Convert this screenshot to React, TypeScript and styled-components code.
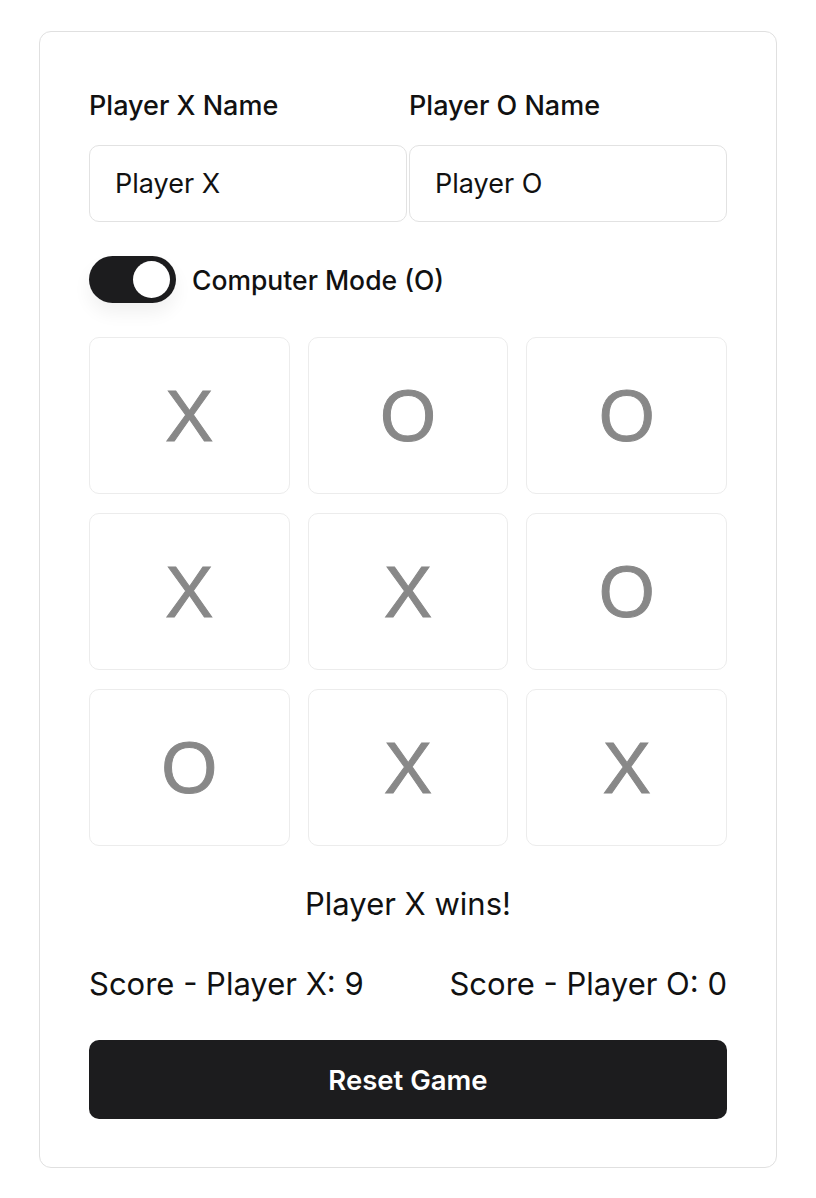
import React, { useState } from "react";
import styled, { createGlobalStyle } from "styled-components";

const Global = createGlobalStyle`
  html, body { margin: 0; padding: 0; background: #fff; }
  body { font-family: Inter, "Noto Sans", sans-serif; color: #111; }
  * { box-sizing: border-box; }
`;

const Page = styled.div`
  padding-top: 31px;
  display: flex;
  justify-content: center;
`;

const Card = styled.div`
  width: 738px;
  border: 1.5px solid #e0e0e0;
  border-radius: 12px;
  padding: 58px 49px 48px 49px;
  display: flex;
  flex-direction: column;
`;

const NameRow = styled.div`
  display: grid;
  grid-template-columns: 1fr 1fr;
  column-gap: 2px;
`;

const Field = styled.div`
  display: flex;
  flex-direction: column;
  gap: 23px;
`;

const Label = styled.label`
  font-size: 27px;
  line-height: 32px;
  font-weight: 550;
  color: #111;
`;

const Input = styled.input`
  height: 77px;
  border: 1.5px solid #e2e2e2;
  border-radius: 10px;
  padding: 0 25px;
  font-family: Inter, "Noto Sans", sans-serif;
  font-size: 27px;
  color: #111;
  outline: none;
  width: 100%;
`;

const ToggleRow = styled.div`
  margin-top: 34px;
  display: flex;
  align-items: center;
  gap: 16px;
`;

const Track = styled.button<{ $on: boolean }>`
  width: 87px;
  height: 47px;
  border-radius: 24px;
  border: none;
  padding: 0;
  background: ${(p) => (p.$on ? "#1c1c1e" : "#d4d4d8")};
  position: relative;
  cursor: pointer;
  box-shadow: 0 10px 18px rgba(0, 0, 0, 0.06);
`;

const Knob = styled.span<{ $on: boolean }>`
  position: absolute;
  top: 5px;
  left: ${(p) => (p.$on ? "44px" : "5px")};
  width: 37px;
  height: 37px;
  border-radius: 50%;
  background: #fff;
`;

const ToggleText = styled.span`
  font-size: 26.5px;
  font-weight: 550;
  color: #111;
`;

const Board = styled.div`
  margin-top: 34px;
  display: grid;
  grid-template-columns: repeat(3, 1fr);
  grid-template-rows: repeat(3, 157px);
  column-gap: 18px;
  row-gap: 19px;
`;

const Cell = styled.button`
  border: 1.5px solid #ececec;
  border-radius: 10px;
  background: #fff;
  display: flex;
  align-items: center;
  justify-content: center;
  font-family: "Liberation Sans", Arial, sans-serif;
  font-size: 72px;
  color: #888;
  padding: 0;
  cursor: pointer;
  -webkit-text-stroke: 1px #888;
`;

const Status = styled.div`
  margin-top: 38px;
  text-align: center;
  font-size: 31px;
  line-height: 40px;
  color: #111;
`;

const ScoreRow = styled.div`
  margin-top: 40px;
  display: flex;
  justify-content: space-between;
  font-size: 31px;
  line-height: 40px;
  color: #111;
`;

const ResetButton = styled.button`
  margin-top: 36px;
  height: 79px;
  border: none;
  border-radius: 10px;
  background: #1c1c1e;
  color: #fff;
  font-family: Inter, "Noto Sans", sans-serif;
  font-size: 27.5px;
  font-weight: 600;
  cursor: pointer;
`;

const cells = ["X", "O", "O", "X", "X", "O", "O", "X", "X"];

export default function App() {
  const [on, setOn] = useState(true);
  return (
    <>
      <Global />
      <Page>
        <Card>
          <NameRow>
            <Field>
              <Label>Player X Name</Label>
              <Input defaultValue="Player X" />
            </Field>
            <Field>
              <Label>Player O Name</Label>
              <Input defaultValue="Player O" />
            </Field>
          </NameRow>
          <ToggleRow>
            <Track $on={on} onClick={() => setOn(!on)} aria-label="Computer Mode">
              <Knob $on={on} />
            </Track>
            <ToggleText>Computer Mode (O)</ToggleText>
          </ToggleRow>
          <Board>
            {cells.map((c, i) => (
              <Cell key={i}>{c}</Cell>
            ))}
          </Board>
          <Status>Player X wins!</Status>
          <ScoreRow>
            <span>Score - Player X: 9</span>
            <span>Score - Player O: 0</span>
          </ScoreRow>
          <ResetButton>Reset Game</ResetButton>
        </Card>
      </Page>
    </>
  );
}
